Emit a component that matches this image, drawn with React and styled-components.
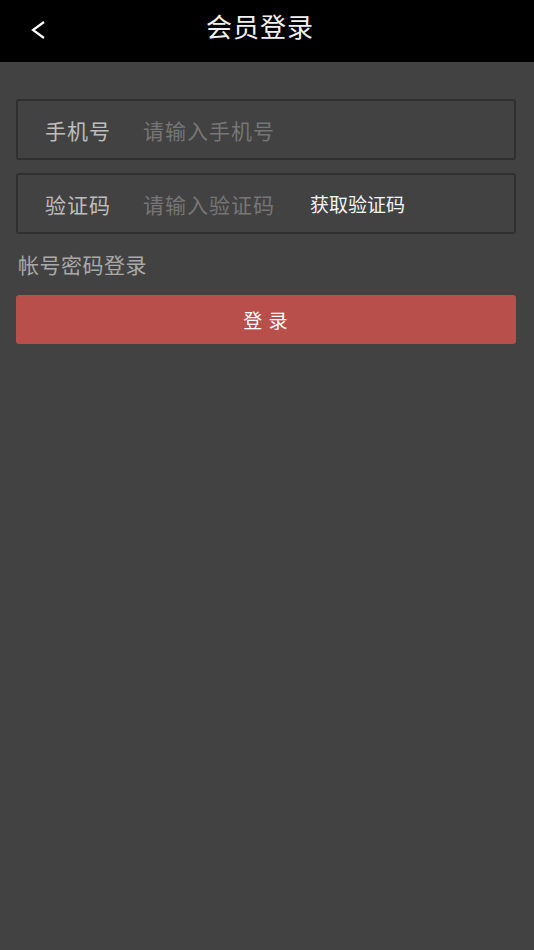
import React, { useState } from 'react';
import styled, { createGlobalStyle } from 'styled-components';

const GlobalStyle = createGlobalStyle`
  html, body {
    margin: 0;
    padding: 0;
    background: #000;
  }
  body {
    font-family: "Noto Sans CJK SC", "Noto Sans", sans-serif;
  }
  * {
    box-sizing: border-box;
  }
`;

const Page = styled.div`
  min-height: 950px;
  background: #424242;
  display: flex;
  flex-direction: column;
`;

const Header = styled.header`
  height: 62px;
  background: #000;
  display: flex;
  align-items: center;
  justify-content: center;
  position: relative;
`;

const BackButton = styled.button`
  position: absolute;
  left: 26px;
  top: 14px;
  width: 24px;
  height: 32px;
  background: none;
  border: none;
  padding: 0;
  display: flex;
  align-items: center;
  justify-content: center;
  cursor: pointer;
`;

const Title = styled.h1`
  margin: -12px 14px 0 0;
  color: #f2f2f2;
  font-size: 26px;
  font-weight: 400;
  letter-spacing: 1px;
`;

const Form = styled.div`
  padding: 37px 18px 0 16px;
  display: flex;
  flex-direction: column;
`;

const Field = styled.div`
  height: 61px;
  border: 2px solid #2f2f2f;
  border-radius: 3px;
  display: flex;
  align-items: center;
  padding-left: 27px;
  margin-bottom: ${(p) => p.gap || 0}px;
`;

const Label = styled.span`
  width: 98px;
  flex-shrink: 0;
  color: #bdbdbd;
  font-size: 21px;
  letter-spacing: 1px;
`;

const Input = styled.input`
  width: ${(p) => p.w || 300}px;
  background: transparent;
  border: none;
  outline: none;
  padding: 0;
  color: #ddd;
  font-family: inherit;
  font-size: 21px;
  letter-spacing: 1px;
  &::placeholder {
    color: #767676;
  }
`;

const CodeLink = styled.span`
  color: #f5f5f5;
  font-size: 19px;
  margin-left: 27px;
  cursor: pointer;
`;

const Switch = styled.div`
  color: #a9a9a9;
  font-size: 21px;
  letter-spacing: 0.5px;
  margin: 15px 0 0 2px;
  line-height: 30px;
`;

const LoginButton = styled.button`
  margin-top: 16px;
  height: 49px;
  background: #b94f4b;
  border: none;
  border-radius: 3px;
  color: #fff;
  font-family: inherit;
  font-size: 19px;
  letter-spacing: 1px;
  cursor: pointer;
`;

const App = () => {
  const [phone, setPhone] = useState('');
  const [code, setCode] = useState('');

  return (
    <>
      <GlobalStyle />
      <Page>
        <Header>
          <BackButton aria-label="back">
            <svg width="16" height="18" viewBox="0 0 16 18">
              <path d="M14 1 L3 9 L14 17" fill="none" stroke="#fff" strokeWidth="2.2" />
            </svg>
          </BackButton>
          <Title>会员登录</Title>
        </Header>
        <Form>
          <Field gap={13}>
            <Label>手机号</Label>
            <Input
              w={300}
              placeholder="请输入手机号"
              value={phone}
              onChange={(e) => setPhone(e.target.value)}
            />
          </Field>
          <Field>
            <Label>验证码</Label>
            <Input
              w={140}
              placeholder="请输入验证码"
              value={code}
              onChange={(e) => setCode(e.target.value)}
            />
            <CodeLink>获取验证码</CodeLink>
          </Field>
          <Switch>帐号密码登录</Switch>
          <LoginButton>登 录</LoginButton>
        </Form>
      </Page>
    </>
  );
};

export default App;
